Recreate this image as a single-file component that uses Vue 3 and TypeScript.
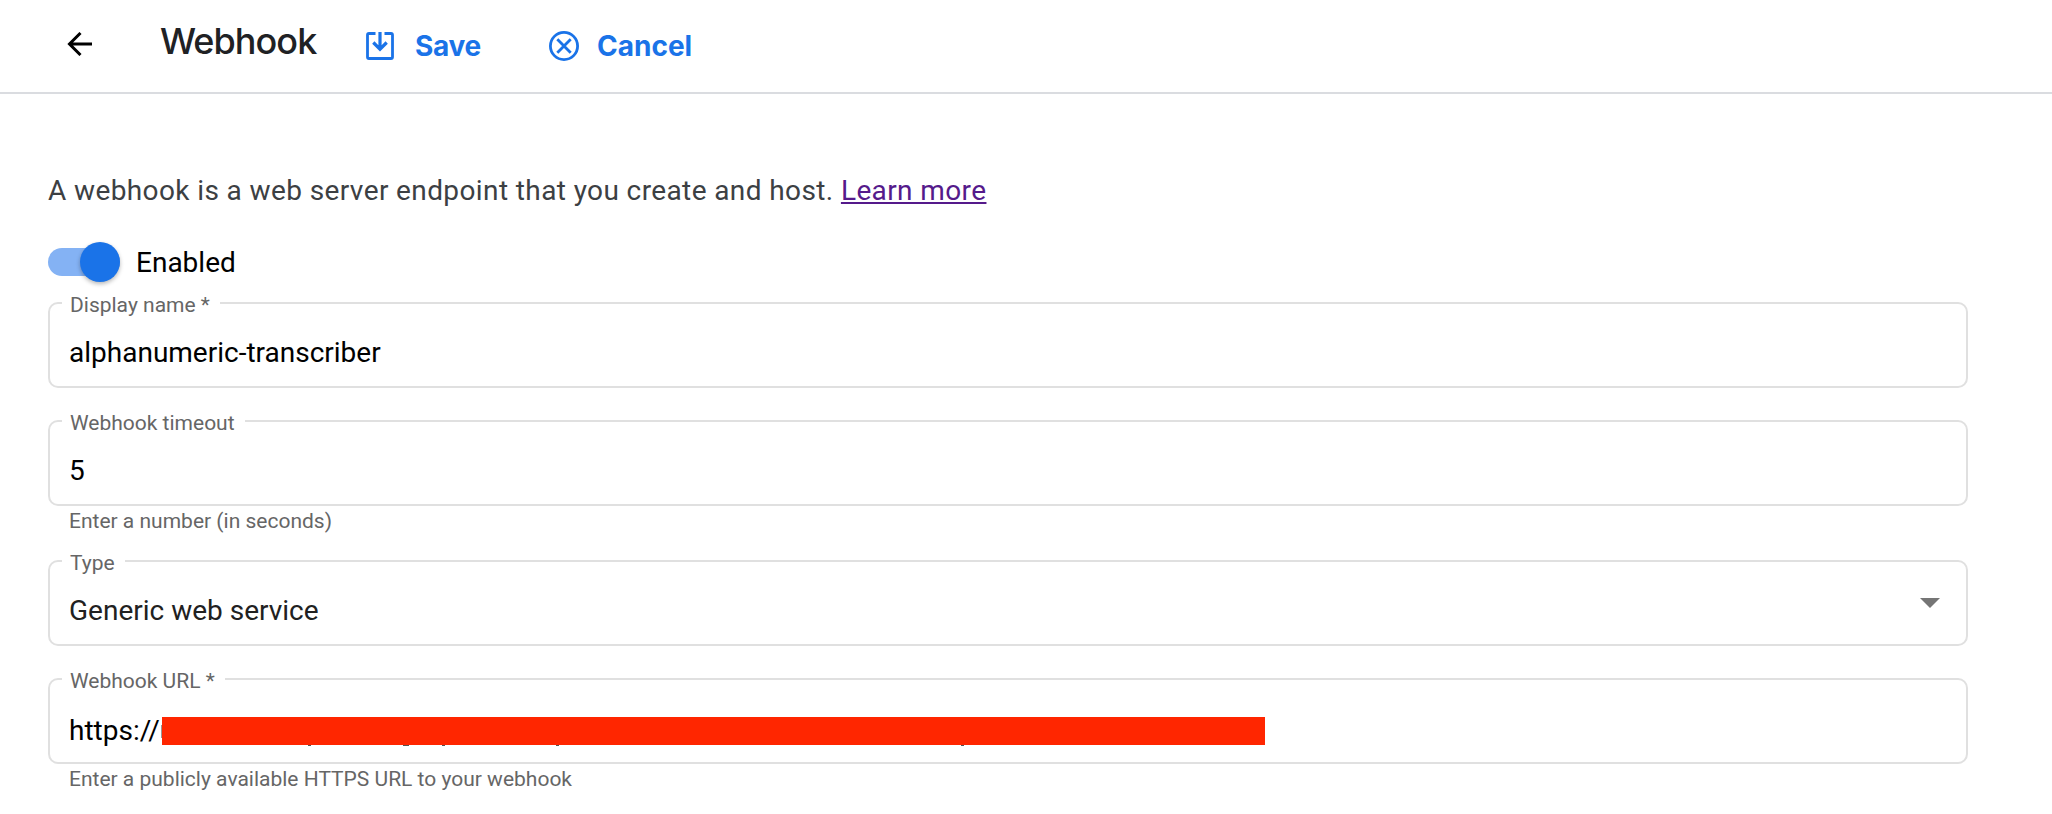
<script setup lang="ts">
interface Field {
  label: string
  value: string
  hint?: string
  kind?: 'select' | 'url'
}

const fields: Field[] = [
  { label: 'Display name *', value: 'alphanumeric-transcriber' },
  { label: 'Webhook timeout', value: '5', hint: 'Enter a number (in seconds)' },
  { label: 'Type', value: 'Generic web service', kind: 'select' },
  { label: 'Webhook URL *', value: 'https://', hint: 'Enter a publicly available HTTPS URL to your webhook', kind: 'url' },
]
</script>

<template>
  <div class="page">
    <header class="toolbar">
      <button class="back" aria-label="Back">
        <svg width="26" height="24" viewBox="0 0 26 24" fill="none" stroke="#000" stroke-width="3">
          <path d="M25 12H3M13.5 1L2.5 12L13.5 23" />
        </svg>
      </button>
      <h1 class="title">Webhook</h1>
      <button class="action save">
        <svg width="28" height="28" viewBox="0 0 28 28" fill="none" stroke="#1a73e8" stroke-width="2.8">
          <path d="M9.5 1.5H3Q1.5 1.5 1.5 3V25Q1.5 26.5 3 26.5H25Q26.5 26.5 26.5 25V3Q26.5 1.5 25 1.5H18.5" />
          <path d="M14 0V17M7.3 10.5L14 17.2L20.7 10.5" stroke-width="3.2" />
        </svg>
        <span>Save</span>
      </button>
      <button class="action cancel">
        <svg width="30" height="30" viewBox="0 0 30 30" fill="none" stroke="#1a73e8" stroke-width="2.8">
          <circle cx="15" cy="15" r="13.6" />
          <path d="M8.3 8.3L21.7 21.7M21.7 8.3L8.3 21.7" />
        </svg>
        <span>Cancel</span>
      </button>
    </header>

    <main class="content">
      <p class="intro"><span>A webhook is a web server endpoint that you create and host. </span><a class="learn">Learn more</a></p>
      <div class="toggle">
        <span class="track"><span class="thumb"></span></span>
        <span class="toggle-label">Enabled</span>
      </div>
      <div v-for="f in fields" :key="f.label" class="field" :class="{ hinted: f.hint }">
        <fieldset class="box">
          <legend><span>{{ f.label }}</span></legend>
          <div class="row" :class="f.kind">
            <span class="value">{{ f.value }}</span>
            <span v-if="f.kind === 'url'" class="redaction">
              <i class="edge"></i>
              <i class="tail t1"></i><i class="tail t2"></i><i class="tail t3"></i><i class="tail t4"></i><i class="tail t5"></i>
            </span>
            <svg v-if="f.kind === 'select'" class="caret" width="20" height="10" viewBox="0 0 20 10">
              <path d="M0 0H20L10 10Z" fill="#757575" />
            </svg>
          </div>
        </fieldset>
        <div v-if="f.hint" class="hint">{{ f.hint }}</div>
      </div>
    </main>
  </div>
</template>

<style>
body {
  margin: 0;
  background: #fff;
}
</style>

<style scoped>
.page {
  height: 814px;
  overflow: hidden;
  background: #fff;
  font-family: Roboto, sans-serif;
  font-size: 28px;
  color: #000;
}
.toolbar {
  box-sizing: border-box;
  height: 94px;
  border-bottom: 2px solid #dadce0;
  display: flex;
  align-items: flex-start;
  padding-left: 67px;
}
button {
  border: 0;
  padding: 0;
  background: none;
  display: flex;
  align-items: center;
}
svg {
  display: block;
  flex: none;
}
.back {
  margin-top: 32px;
  width: 93px;
}
.title {
  margin: 19px 0 0;
  width: 206px;
  font: 450 36px/44px Inter, sans-serif;
  letter-spacing: -0.95px;
  color: #202124;
}
.action {
  margin-top: 30px;
  height: 32px;
  font: 700 28px/32px Inter, sans-serif;
  color: #1a73e8;
}
.save {
  width: 183px;
  gap: 21px;
  letter-spacing: -0.3px;
}
.cancel {
  gap: 18px;
}
.content {
  padding: 75px 84px 0 48px;
}
.intro {
  margin: 0;
  height: 44px;
  line-height: 44px;
  color: #3c4043;
  letter-spacing: 0.39px;
  white-space: nowrap;
}
.learn {
  color: #551a8b;
  text-decoration: underline;
  text-decoration-thickness: 2px;
  text-underline-offset: 2px;
}
.toggle {
  display: flex;
  align-items: center;
  height: 40px;
  margin-top: 29px;
}
.track {
  display: flex;
  justify-content: flex-end;
  align-items: center;
  width: 72px;
  height: 28px;
  border-radius: 14px;
  background: #84b2f4;
}
.thumb {
  width: 40px;
  height: 40px;
  border-radius: 50%;
  background: #1a73e8;
  box-shadow: 0 2px 4px rgba(0, 0, 0, 0.28);
}
.toggle-label {
  margin-left: 16px;
}
.field {
  height: 118px;
}
.toggle + .field {
  margin-top: 8px;
}
.field.hinted {
  height: 140px;
}
.box {
  box-sizing: border-box;
  height: 98px;
  margin: 0;
  padding: 0 0 0 12px;
  border: 2px solid #e0e0e0;
  border-radius: 10px;
  min-width: 0;
}
legend {
  height: 26px;
  padding: 0 10.5px 0 8px;
  font-size: 21px;
  color: #666;
}
legend span {
  display: block;
  line-height: 30px;
}
.row {
  display: flex;
  align-items: center;
  height: 48px;
  padding: 13px 26px 0 7px;
}
.row.url {
  padding-top: 15px;
}
.value {
  line-height: 48px;
}
.select .value {
  color: #212121;
  flex: 1;
}
.caret {
  margin-bottom: 16px;
}
.redaction {
  position: relative;
  width: 1103px;
  height: 28px;
  margin-left: 2px;
  background: #ff2600;
}
.edge {
  position: absolute;
  left: -1px;
  top: 8px;
  width: 1px;
  height: 13px;
  background: #999;
}
.tail {
  position: absolute;
  top: 28px;
  width: 3px;
  height: 1px;
  background: #555;
}
.t1 { left: 146px; }
.t2 { left: 241px; width: 6px; }
.t3 { left: 280px; }
.t4 { left: 394px; }
.t5 { left: 799px; }
.hint {
  padding-left: 21px;
  font-size: 21px;
  line-height: 30px;
  color: #666;
}
</style>
